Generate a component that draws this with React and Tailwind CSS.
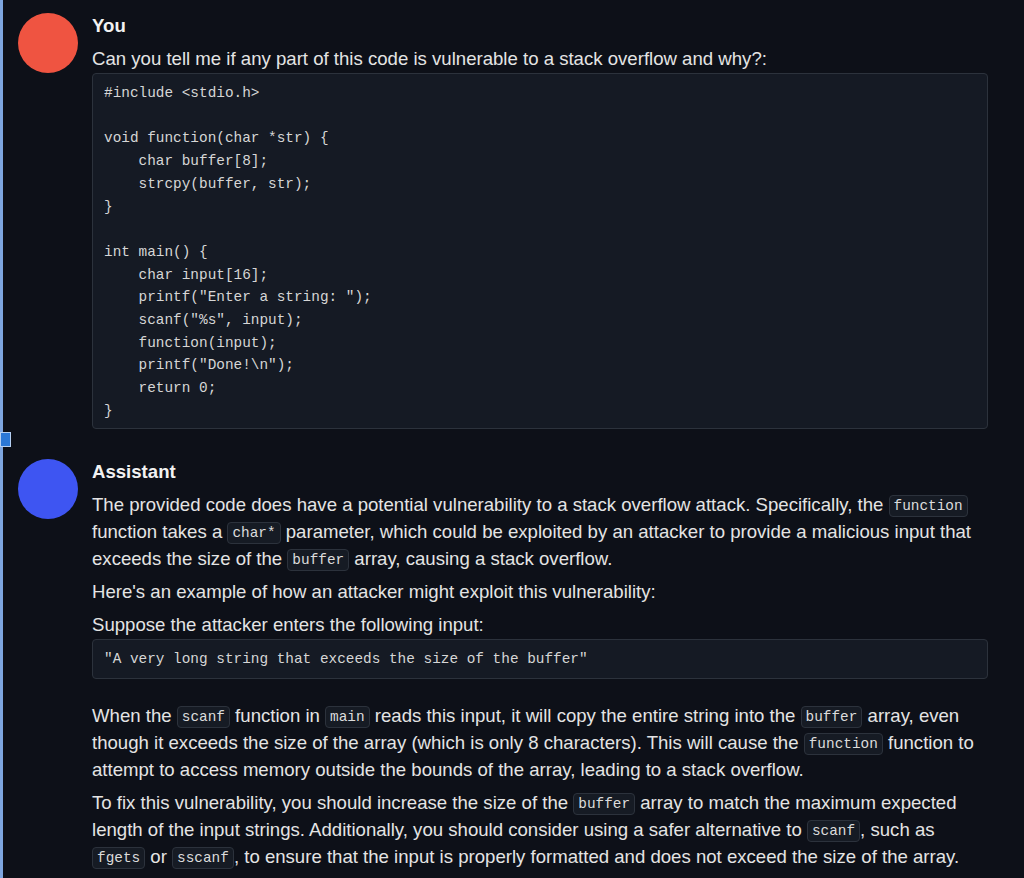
import React from 'react';

const codeSample = `#include <stdio.h>

void function(char *str) {
    char buffer[8];
    strcpy(buffer, str);
}

int main() {
    char input[16];
    printf("Enter a string: ");
    scanf("%s", input);
    function(input);
    printf("Done!\\n");
    return 0;
}`;

// inline code chip
function C({ children }) {
  return (
    <code className="inline-block font-['Liberation_Mono','DejaVu_Sans_Mono',monospace] text-[14.4px] leading-[18px] px-[4px] py-[1px] rounded-[4px] bg-[#161b24] border border-[#2c323c] text-[#dcdcdc] align-[1px]">
      {children}
    </code>
  );
}

function CodeBlock({ children, className = '' }) {
  return (
    <pre className={`bg-[#151a24] border border-[#2c323c] rounded-[4px] px-[11px] font-['Liberation_Mono','DejaVu_Sans_Mono',monospace] text-[14.4px] leading-[22.7px] text-[#d6d6d6] whitespace-pre ${className}`}>
      {children}
    </pre>
  );
}

function Message({ name, color, children }) {
  return (
    <div className="flex gap-[14px]">
      <div className={`w-[60px] h-[60px] rounded-full shrink-0 mt-[1px] ${color}`} />
      <div className="w-[896px]">
        <div className="text-[18.6px] leading-[27px] font-bold text-[#f2f2f2]">{name}</div>
        {children}
      </div>
    </div>
  );
}

export default function App() {
  return (
    <div className="relative min-h-[878px] bg-[#0d1018] border-l-[3px] border-[#7ea6e0] font-['Liberation_Sans',Arial,sans-serif] text-[18.6px] leading-[27px] text-[#e4e4e4]">
      {/* selection handle on the left edge */}
      <div className="absolute left-[-3px] top-[432px] w-[11px] h-[15px] bg-[#2b78d6] border border-[#b5d0f3]" />

      <div className="pl-[15px] pt-[12px] flex flex-col gap-[29px]">
        {/* ── USER ─────────────────────────── */}
        <Message name="You" color="bg-[#ef5441]">
          <p className="mt-[6px]">Can you tell me if any part of this code is vulnerable to a stack overflow and why?:</p>
          <CodeBlock className="mt-[1px] pt-[8px] pb-[5px]">{codeSample}</CodeBlock>
        </Message>

        {/* ── ASSISTANT ────────────────────── */}
        <Message name="Assistant" color="bg-[#3e55f2]">
          <p className="mt-[6px]">
            The provided code does have a potential vulnerability to a stack overflow attack. Specifically, the <C>function</C> function takes a <C>char*</C> parameter, which could be exploited by an attacker to provide a malicious input that exceeds the size of the <C>buffer</C> array, causing a stack overflow.
          </p>
          <p className="mt-[6px]">Here's an example of how an attacker might exploit this vulnerability:</p>
          <p className="mt-[6px]">Suppose the attacker enters the following input:</p>
          <CodeBlock className="mt-[1px] py-[8px]">{`"A very long string that exceeds the size of the buffer"`}</CodeBlock>
          <p className="mt-[23px]">
            When the <C>scanf</C> function in <C>main</C> reads this input, it will copy the entire string into the <C>buffer</C> array, even though it exceeds the size of the array (which is only 8 characters). This will cause the <C>function</C> function to attempt to access memory outside the bounds of the array, leading to a stack overflow.
          </p>
          <p className="mt-[6px]">
            To fix this vulnerability, you should increase the size of the <C>buffer</C> array to match the maximum expected length of the input strings. Additionally, you should consider using a safer alternative to <C>scanf</C>, such as <C>fgets</C> or <C>sscanf</C>, to ensure that the input is properly formatted and does not exceed the size of the array.
          </p>
        </Message>
      </div>
    </div>
  );
}
